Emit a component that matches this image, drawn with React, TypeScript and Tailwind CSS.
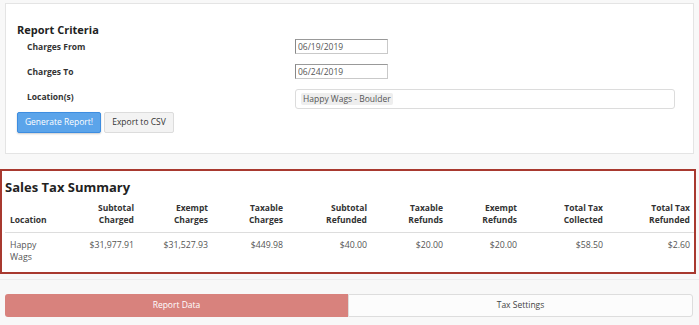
import { useState } from "react";

const columns = [
  { top: "", bottom: "Location" },
  { top: "Subtotal", bottom: "Charged" },
  { top: "Exempt", bottom: "Charges" },
  { top: "Taxable", bottom: "Charges" },
  { top: "Subtotal", bottom: "Refunded" },
  { top: "Taxable", bottom: "Refunds" },
  { top: "Exempt", bottom: "Refunds" },
  { top: "Total Tax", bottom: "Collected" },
  { top: "Total Tax", bottom: "Refunded" },
];

const row = ["$31,977.91", "$31,527.93", "$449.98", "$40.00", "$20.00", "$20.00", "$58.50", "$2.60"];

const gridCols = "grid grid-cols-[60px_73px_74px_75px_84px_76px_74px_86px_87px]";

export default function App() {
  const [tab, setTab] = useState("report");

  return (
    <div className="w-[699px] h-[325px] overflow-hidden bg-[#f8f8f8] pt-[3px] font-['Open_Sans',sans-serif] text-[#333]">
      {/* report criteria */}
      <div className="mx-[5px] h-[151px] border border-[#e4e4e4] bg-white pl-[11px] pt-[17px]">
        <h2 className="text-[11px] font-bold leading-[17px] text-[#222]">Report Criteria</h2>
        <div className="mt-[1px]">
          <div className="flex h-[25px]">
            <label className="w-[278px] pl-[10px] pt-[1px] text-[8.5px] font-bold leading-[13px]">Charges From</label>
            <input
              defaultValue="06/19/2019"
              className="h-[15px] w-[93px] border border-[#c9c9c9] border-l-[#888] border-t-[#999] px-[2px] text-[8.5px] text-[#555] outline-none"
            />
          </div>
          <div className="flex h-[25px]">
            <label className="w-[278px] pl-[10px] pt-[1px] text-[8.5px] font-bold leading-[13px]">Charges To</label>
            <input
              defaultValue="06/24/2019"
              className="h-[15px] w-[93px] border border-[#c9c9c9] border-l-[#888] border-t-[#999] px-[2px] text-[8.5px] text-[#555] outline-none"
            />
          </div>
          <div className="flex h-[23px]">
            <label className="w-[278px] pl-[10px] pt-[1px] text-[8.5px] font-bold leading-[13px]">Location(s)</label>
            <div className="flex h-[20px] w-[380px] items-center rounded-[3px] border border-[#dcdcdc] px-[5px]">
              <span className="rounded-[2px] bg-[#eeeeee] px-[2px] text-[8.5px] leading-[12px] text-[#555]">Happy Wags - Boulder</span>
            </div>
          </div>
        </div>
        <div className="flex gap-[3px]">
          <button className="h-[21px] w-[84px] rounded-[2px] border border-[#3d8de0] bg-[#5ba4ea] text-[8.5px] text-white shadow-[0_1px_2px_rgba(0,0,0,0.2)]">
            Generate Report!
          </button>
          <button className="h-[21px] w-[70px] rounded-[2px] border border-[#dcdcdc] bg-[#f3f3f3] text-[8.5px] text-[#333]">
            Export to CSV
          </button>
        </div>
      </div>

      {/* sales tax summary */}
      <div className="mt-[15px] border-b border-[#ececec] pb-[5px]">
        <div className="h-[105px] w-[696px] border-2 border-[#a8392f] bg-white pl-[3px]">
          <h2 className="pt-[7px] text-[13px] font-bold leading-[18px] text-[#222]">Sales Tax Summary</h2>
          <div className={`${gridCols} mt-[6px] border-b border-[#dddddd] pb-[6px] text-[8.5px] font-bold leading-[12px]`}>
            {columns.map((c, i) => (
              <div key={i} className={i === 0 ? "flex items-end pl-[5px]" : "pr-[4px] text-right"}>
                {i === 0 ? (
                  c.bottom
                ) : (
                  <>
                    <div>{c.top}</div>
                    <div>{c.bottom}</div>
                  </>
                )}
              </div>
            ))}
          </div>
          <div className={`${gridCols} pt-[6px] text-[8.75px] leading-[12px] text-[#555]`}>
            <div className="pl-[5px]">
              Happy
              <br />
              Wags
            </div>
            {row.map((v, i) => (
              <div key={i} className="pr-[4px] text-right">
                {v}
              </div>
            ))}
          </div>
        </div>
      </div>

      {/* tabs */}
      <div className="mx-[5px] mt-[14px] flex h-[23px] w-[688px]">
        <button
          onClick={() => setTab("report")}
          className={`flex-1 rounded-l-[3px] text-[8.5px] ${tab === "report" ? "bg-[#d8827d] text-white" : "border border-[#dddddd] bg-[#fcfcfc] text-[#444]"}`}
        >
          Report Data
        </button>
        <button
          onClick={() => setTab("tax")}
          className={`flex-1 rounded-r-[3px] text-[8.5px] ${tab === "tax" ? "bg-[#d8827d] text-white" : "border border-[#dddddd] bg-[#fcfcfc] text-[#444]"}`}
        >
          Tax Settings
        </button>
      </div>
    </div>
  );
}
